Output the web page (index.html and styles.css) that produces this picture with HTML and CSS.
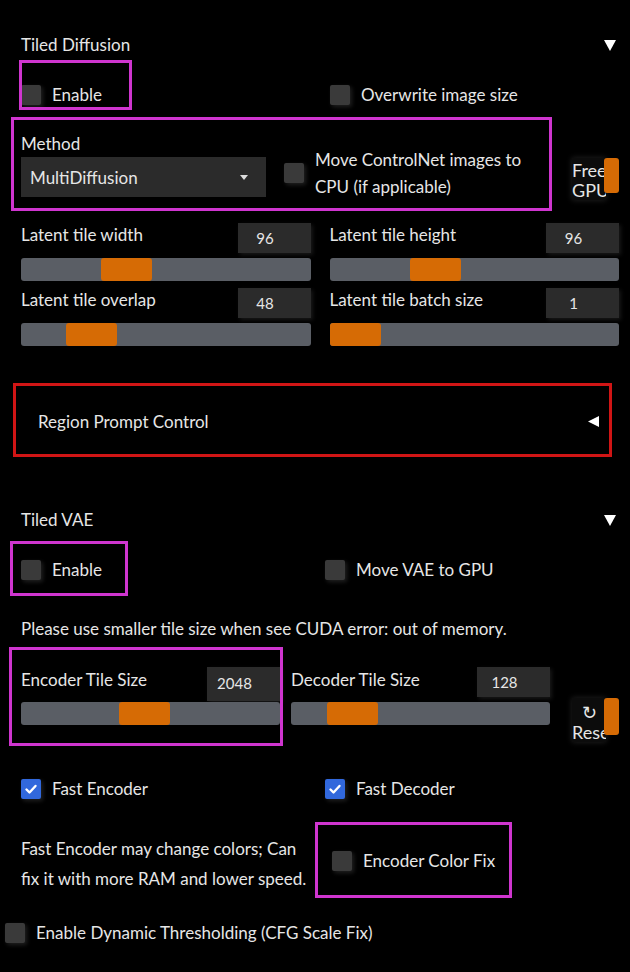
FILE: index.html
```html
<!DOCTYPE html>
<html lang="en">
<head>
<meta charset="utf-8">
<title>Tiled Diffusion</title>
<link rel="stylesheet" href="styles.css">
</head>
<body>
<main class="page">
  <section class="accordion">
    <div class="acc-head">
      <span>Tiled Diffusion</span>
      <svg class="tri" viewBox="0 0 12 11"><polygon points="0,0 12,0 6,11" fill="#fff"/></svg>
    </div>
    <div class="row r1 r1-top">
      <div><label class="check hl hl-enable1"><span class="box"></span><span>Enable</span></label></div>
      <div><label class="check"><span class="box"></span><span>Overwrite image size</span></label></div>
    </div>
    <div class="method-row">
      <div class="method-group hl hl-method">
        <div class="dd-wrap">
          <div class="field-label">Method</div>
          <div class="dropdown"><span>MultiDiffusion</span><svg class="caret" viewBox="0 0 8 5"><polygon points="0,0 8,0 4,5" fill="#ddd"/></svg></div>
        </div>
        <label class="check check-ml"><span class="box"></span><span class="ml-text">Move ControlNet images to<br>CPU (if applicable)</span></label>
      </div>
      <div class="side-btn free-btn">
        <span class="side-text">Free<br>GPU</span>
        <span class="side-bar"></span>
      </div>
    </div>
    <div class="slider-grid">
      <div class="slider">
        <div class="slider-head"><span class="slabel">Latent tile width</span><span class="num">96</span></div>
        <div class="track"><span class="thumb" style="left:80px"></span></div>
      </div>
      <div class="slider">
        <div class="slider-head"><span class="slabel">Latent tile height</span><span class="num">96</span></div>
        <div class="track"><span class="thumb" style="left:80px"></span></div>
      </div>
      <div class="slider">
        <div class="slider-head"><span class="slabel">Latent tile overlap</span><span class="num">48</span></div>
        <div class="track"><span class="thumb" style="left:45px"></span></div>
      </div>
      <div class="slider">
        <div class="slider-head"><span class="slabel">Latent tile batch size</span><span class="num">1</span></div>
        <div class="track"><span class="thumb" style="left:0px"></span></div>
      </div>
    </div>
  </section>

  <div class="collapsed">
    <span>Region Prompt Control</span>
    <svg class="tri-left" viewBox="0 0 11 11"><polygon points="11,0 11,11 0,5.5" fill="#fff"/></svg>
  </div>

  <section class="accordion vae">
    <div class="acc-head">
      <span>Tiled VAE</span>
      <svg class="tri" viewBox="0 0 12 11"><polygon points="0,0 12,0 6,11" fill="#fff"/></svg>
    </div>
    <div class="row r1 r1-vae">
      <div><label class="check hl hl-enable2"><span class="box"></span><span>Enable</span></label></div>
      <div><label class="check"><span class="box"></span><span>Move VAE to GPU</span></label></div>
    </div>
    <p class="note">Please use smaller tile size when see CUDA error: out of memory.</p>
    <div class="tile-row">
      <div class="slider tile hl hl-encoder">
        <div class="slider-head tall"><span class="slabel">Encoder Tile Size</span><span class="num num-tall">2048</span></div>
        <div class="track near"><span class="thumb" style="left:98px"></span></div>
      </div>
      <div class="slider tile">
        <div class="slider-head tall"><span class="slabel">Decoder Tile Size</span><span class="num">128</span></div>
        <div class="track near"><span class="thumb" style="left:36px"></span></div>
      </div>
      <div class="side-btn reset-btn">
        <span class="side-text">↻<br>Reset</span>
        <span class="side-bar"></span>
      </div>
    </div>
    <div class="row fast-row">
      <div><label class="check"><span class="box on"><svg viewBox="0 0 20 20"><path d="M5.5 10.5l3 3 6-6.5" fill="none" stroke="#fff" stroke-width="2.4" stroke-linecap="round" stroke-linejoin="round"/></svg></span><span>Fast Encoder</span></label></div>
      <div><label class="check"><span class="box on"><svg viewBox="0 0 20 20"><path d="M5.5 10.5l3 3 6-6.5" fill="none" stroke="#fff" stroke-width="2.4" stroke-linecap="round" stroke-linejoin="round"/></svg></span><span>Fast Decoder</span></label></div>
    </div>
    <div class="row fix-row">
      <p class="note2">Fast Encoder may change colors; Can fix it with more RAM and lower speed.</p>
      <div class="fix-col"><label class="check hl hl-fix"><span class="box"></span><span>Encoder Color Fix</span></label></div>
    </div>
  </section>

  <label class="check dyn"><span class="box"></span><span>Enable Dynamic Thresholding (CFG Scale Fix)</span></label>
</main>
</body>
</html>
```

FILE: styles.css
```css
*, *::before, *::after { box-sizing: border-box; }
html, body { margin: 0; background: #000; }
body {
  font-family: Lato, "Noto Sans", sans-serif;
  font-size: 17px;
  color: #e6e6e6;
  width: 630px;
  height: 972px;
  overflow: hidden;
}
p { margin: 0; }
.page { padding: 33px 11px 0 21px; }

.acc-head {
  display: flex;
  justify-content: space-between;
  align-items: center;
  height: 24px;
  line-height: 24px;
}
.tri { width: 12px; height: 11px; margin-right: 3px; }

.row { display: grid; }
.r1 { margin-top: 28px; height: 20px; }
.r1-top { grid-template-columns: 309px 1fr; }
.r1-vae { grid-template-columns: 304px 1fr; }

.check {
  display: inline-flex;
  align-items: center;
  gap: 11px;
  line-height: 20px;
  white-space: nowrap;
}
.box {
  flex: none;
  width: 20px;
  height: 20px;
  background: #3a3a3a;
  border-radius: 2px;
  box-shadow: 2px 2px 4px rgba(70, 70, 70, 0.45);
}
.box.on { background: #3168dc; display: block; }
.box.on svg { display: block; width: 20px; height: 20px; }

.hl { position: relative; }
.hl::after {
  content: "";
  position: absolute;
  border: 3px solid #cf35cf;
  pointer-events: none;
}
.hl-enable1::after { top: -25px; left: -2px; width: 113px; height: 50px; }
.hl-method::after { top: -15px; left: -10px; width: 541px; height: 94px; }
.hl-enable2::after { top: -19px; left: -11px; width: 118px; height: 55px; }
.hl-encoder::after { top: -20px; left: -12px; width: 274px; height: 99px; }
.hl-fix::after { top: -29px; left: -17px; width: 197px; height: 76px; }

.method-row { display: flex; margin-top: 27px; }
.method-group { display: flex; height: 68px; }
.dd-wrap { width: 245px; }
.field-label { height: 24px; line-height: 24px; }
.dropdown {
  margin-top: 1px;
  height: 40px;
  background: #2b2b2b;
  display: flex;
  align-items: center;
  justify-content: space-between;
  padding: 0 18px 0 9px;
}
.caret { width: 8px; height: 5px; }
.check-ml { margin-left: 18px; margin-top: 14px; align-self: flex-start; }
.ml-text { line-height: 27px; white-space: nowrap; }

.side-btn { position: relative; width: 47px; height: 42px; }
.side-text {
  display: block;
  width: 34px;
  overflow: hidden;
  text-align: center;
  white-space: nowrap;
  line-height: 20px;
  font-size: 18px;
  background: #0c0c0c;
  box-shadow: 0 0 6px rgba(60, 60, 60, 0.6);
}
.side-bar {
  position: absolute;
  right: 0;
  top: 0;
  width: 15px;
  height: 35px;
  background: #d66b05;
  border-radius: 3px;
}
.free-btn { margin-left: auto; margin-top: 26px; }
.free-btn .side-text { padding-top: 2px; }

.slider-grid {
  display: grid;
  grid-template-columns: 1fr 1fr;
  column-gap: 19px;
  row-gap: 7px;
  margin-top: 23px;
}
.slider-head {
  display: flex;
  justify-content: space-between;
  height: 30px;
}
.slabel { line-height: 24px; }
.num {
  width: 73px;
  height: 30px;
  background: #2b2b2b;
  text-align: center;
  padding-right: 18px;
  line-height: 30px;
  font-size: 15px;
  box-shadow: 2px 2px 4px rgba(60, 60, 60, 0.4);
}
.track {
  position: relative;
  margin-top: 5px;
  height: 23px;
  background: #5a5e65;
  border-radius: 3px;
}
.thumb {
  position: absolute;
  top: 0;
  width: 51px;
  height: 23px;
  background: #d66b05;
  border-radius: 3px;
}

.collapsed {
  margin-top: 37px;
  margin-left: -8px;
  width: 599px;
  height: 74px;
  border: 3px solid #d01515;
  display: flex;
  align-items: center;
  justify-content: space-between;
  padding: 2px 10px 0 22px;
}
.tri-left { width: 11px; height: 11px; }

.vae { margin-top: 51px; }
.note { margin-top: 37px; line-height: 24px; }

.tile-row { display: flex; align-items: flex-start; height: 58px; margin-top: 26px; }
.tile { width: 259px; }
.tile + .tile { margin-left: 11px; }
.slider-head.tall { height: 32px; }
.tall .slabel { line-height: 26px; }
.num-tall { height: 34px; line-height: 32px; }
.track.near { margin-top: 3px; }
.reset-btn { flex: none; margin-left: 22px; margin-top: 31px; height: 44px; }
.reset-btn .side-bar { height: 37px; }
.reset-btn .side-text { padding-top: 4px; height: 44px; }

.fast-row { grid-template-columns: 304px 1fr; margin-top: 54px; height: 20px; }
.fix-row { grid-template-columns: 294px 1fr; margin-top: 35px; }
.note2 { line-height: 30px; }
.fix-col { padding-left: 17px; padding-top: 17px; }

.dyn { margin-top: 29px; margin-left: -16px; }
```
